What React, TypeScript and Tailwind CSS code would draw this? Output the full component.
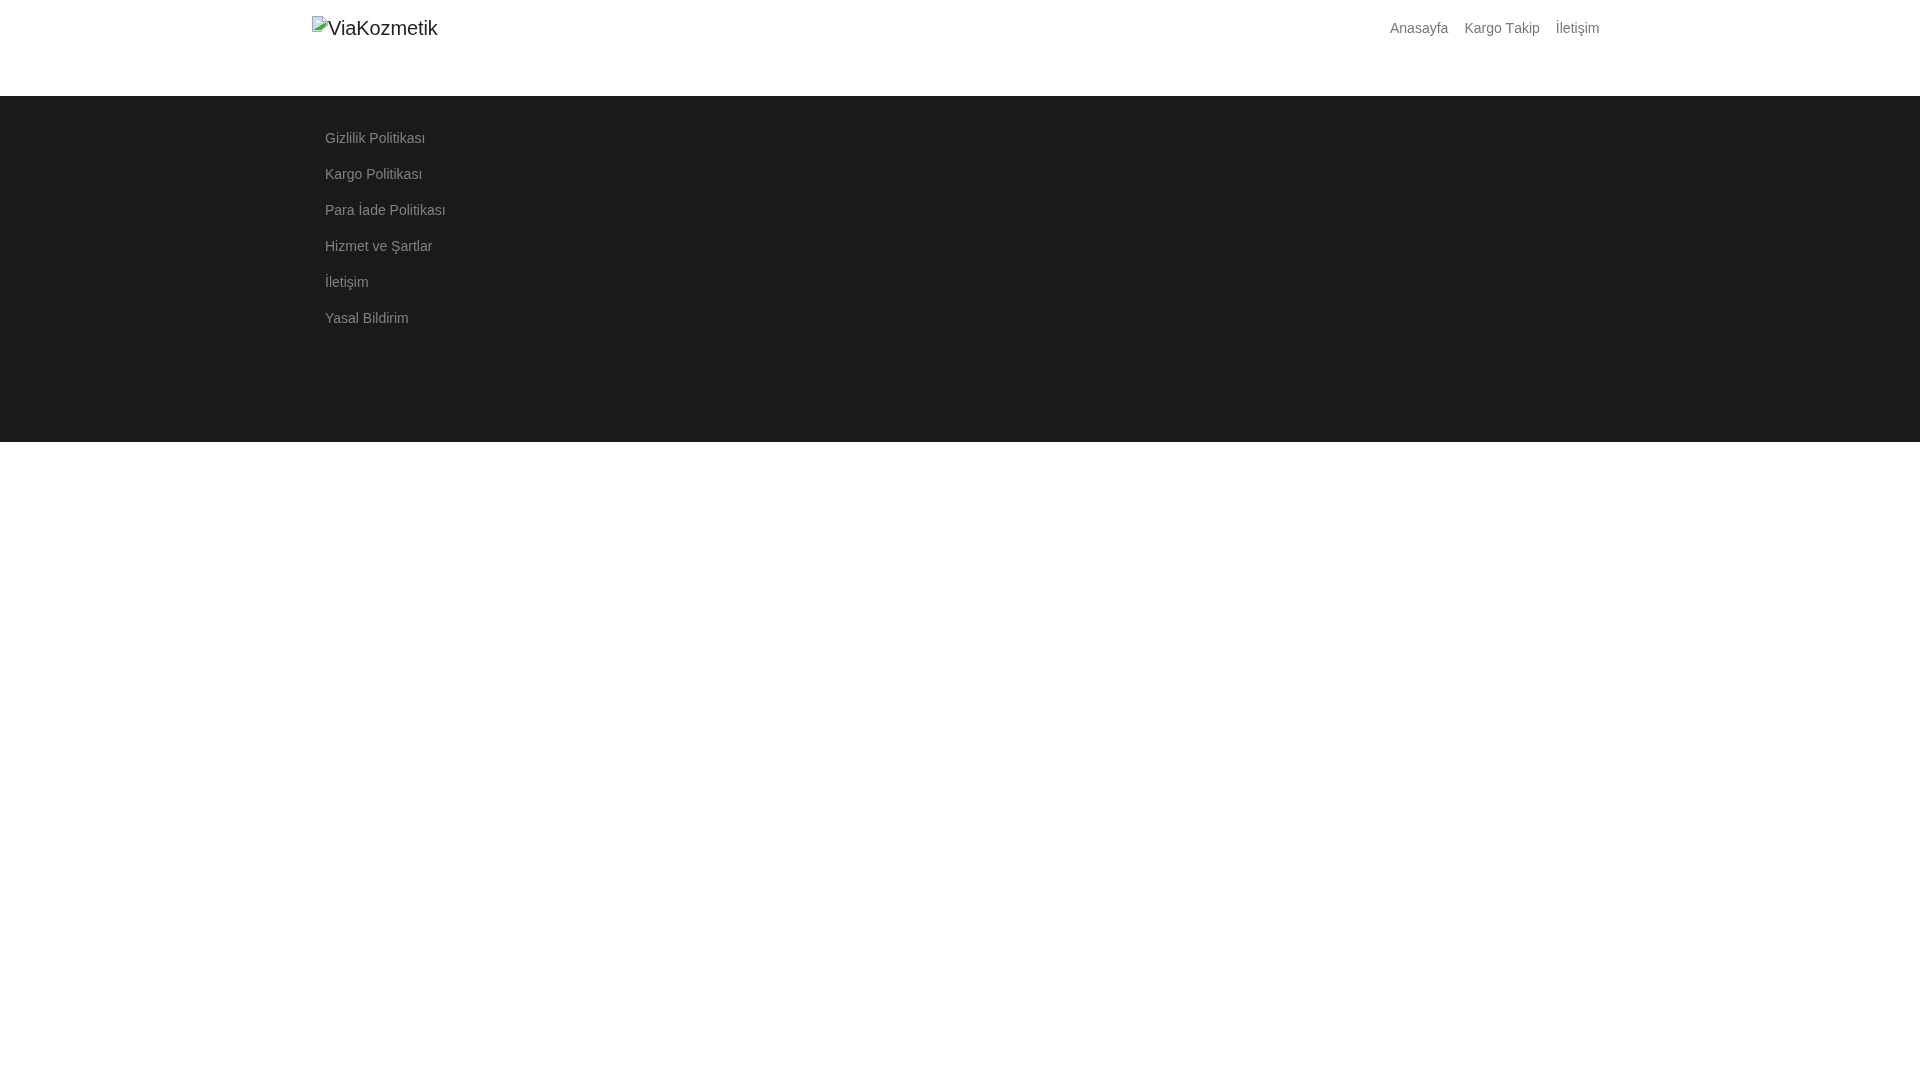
export default function App() {
  const links = ["Gizlilik Politikası", "Kargo Politikası", "Para İade Politikası", "Hizmet ve Şartlar", "İletişim", "Yasal Bildirim"];
  const nav = ["Anasayfa", "Kargo Takip", "İletişim"];
  return (
    <div className="min-h-[1080px] bg-white font-['Liberation_Sans',Arial,sans-serif]">
      <header className="h-[96px] w-[1320px] mx-auto px-3 flex justify-between items-start">
        <div className="flex items-start mt-4 text-[20px] leading-[24px] tracking-[-0.1px] text-[#222222] [will-change:transform]">
          <svg width="16" height="16" viewBox="0 0 16 16" className="shrink-0">
            <path d="M0.5 15.5V0.5H10.5L15.5 5.5V10L10 15.5Z" fill="#c9dcf5" />
            <path d="M2 14V13.5L7 10.5 10 8.5 14 6.5V10L9 14Z" fill="#4ea72e" />
            <path d="M3.5 6.5a2.5 1.5 0 0 1 5.5 0Z" fill="#ffffff" />
            <path d="M10.5 0.5V5.5H15.5Z" fill="#ffffff" />
            <path d="M9.5 15.5H0.5V0.5H10.5L15.5 5.5V10M10.5 0.5V5.5H15.5" fill="none" stroke="#a8a8a8" />
          </svg>
          <span>ViaKozmetik</span>
        </div>
        <nav className="flex gap-4 pr-[8.5px] mt-5 text-[14px] leading-[16px] text-[#777777] [font-kerning:none] [will-change:transform]">
          {nav.map((n) => (
            <a key={n}>{n}</a>
          ))}
        </nav>
      </header>
      <footer className="h-[346px] bg-[#1a1a1a]">
        <ul className="w-[1320px] mx-auto pl-[25px] pt-[34px] flex flex-col gap-5 text-[14px] leading-[16px] text-[#808080] [will-change:transform]">
          {links.map((l) => (
            <li key={l}>{l}</li>
          ))}
        </ul>
      </footer>
    </div>
  );
}
